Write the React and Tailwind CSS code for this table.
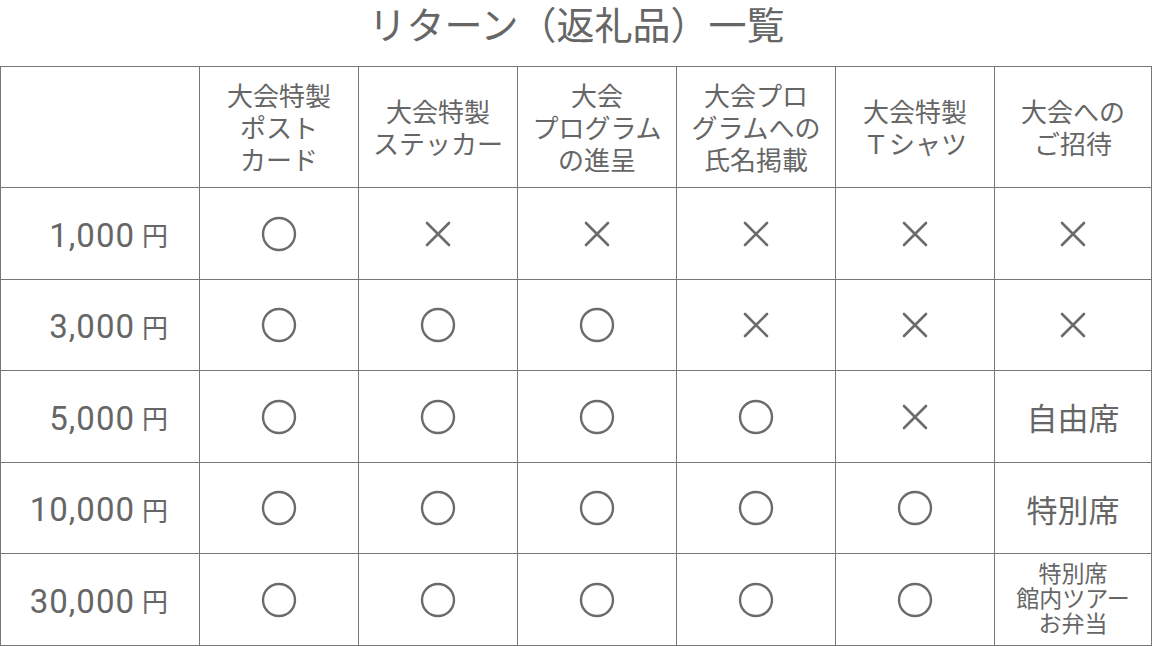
const headers = [
  ['大会特製', 'ポスト', 'カード'],
  ['大会特製', 'ステッカー'],
  ['大会', 'プログラム', 'の進呈'],
  ['大会プロ', 'グラムへの', '氏名掲載'],
  ['大会特製', 'Ｔシャツ'],
  ['大会への', 'ご招待'],
];

const rows = [
  { price: '1,000', marks: ['o', 'x', 'x', 'x', 'x', 'x'], h: 'h-[92px]' },
  { price: '3,000', marks: ['o', 'o', 'o', 'x', 'x', 'x'], h: 'h-[91px]' },
  { price: '5,000', marks: ['o', 'o', 'o', 'o', 'x', '自由席'], h: 'h-[92px]' },
  { price: '10,000', marks: ['o', 'o', 'o', 'o', 'o', '特別席'], h: 'h-[91px]' },
  { price: '30,000', marks: ['o', 'o', 'o', 'o', 'o', 'tour'], h: 'h-[92px]' },
];

function Circle() {
  return (
    <svg width="36" height="36" viewBox="0 0 36 36">
      <circle cx="18" cy="18" r="16" fill="none" stroke="#6b6b6b" strokeWidth="2.4" />
    </svg>
  );
}

function Cross() {
  return (
    <svg width="26" height="26" viewBox="0 0 26 26">
      <path d="M2 2 L24 24 M24 2 L2 24" stroke="#6b6b6b" strokeWidth="2.6" strokeLinecap="round" />
    </svg>
  );
}

function Mark({ value }) {
  if (value === 'o') return <Circle />;
  if (value === 'x') return <Cross />;
  if (value === 'tour') {
    return (
      <div className="text-[23px] leading-[25px] text-center -mt-[4px]">
        <div>特別席</div>
        <div>館内ツアー</div>
        <div>お弁当</div>
      </div>
    );
  }
  return <div className="text-[31px] leading-none">{value}</div>;
}

export default function App() {
  return (
    <div
      className="w-[1153px] h-[646px] bg-white text-[#666666]"
      style={{ fontFamily: '"Noto Sans CJK JP", "Noto Sans", sans-serif' }}
    >
      <div className="h-[66px] flex justify-center">
        <h1 className="text-[38px] leading-[46px] font-normal">リターン（返礼品）一覧</h1>
      </div>

      <div className="grid grid-cols-[199px_repeat(5,159px)_157px] border-l border-t border-[#777777] w-[1152px]">
        <div className="h-[121px] border-r border-b border-[#777777]" />
        {headers.map((lines, i) => (
          <div
            key={i}
            className="h-[121px] border-r border-b border-[#777777] flex flex-col items-center justify-center text-[26px] leading-[32px]"
          >
            {lines.map((l) => (
              <div key={l}>{l}</div>
            ))}
          </div>
        ))}

        {rows.map((row) => (
          <div key={row.price} className="contents">
            <div
              className={`${row.h} border-r border-b border-[#777777] flex items-center justify-end pr-[31px] pt-[3px]`}
            >
              <span
                className="text-[33px] leading-none tracking-[1px]"
                style={{ fontFamily: 'Roboto, "Noto Sans", sans-serif' }}
              >
                {row.price}
              </span>
              <span className="text-[26px] leading-none ml-[7px]">円</span>
            </div>
            {row.marks.map((m, i) => (
              <div
                key={i}
                className={`${row.h} border-r border-b border-[#777777] flex items-center justify-center`}
              >
                <Mark value={m} />
              </div>
            ))}
          </div>
        ))}
      </div>
    </div>
  );
}
